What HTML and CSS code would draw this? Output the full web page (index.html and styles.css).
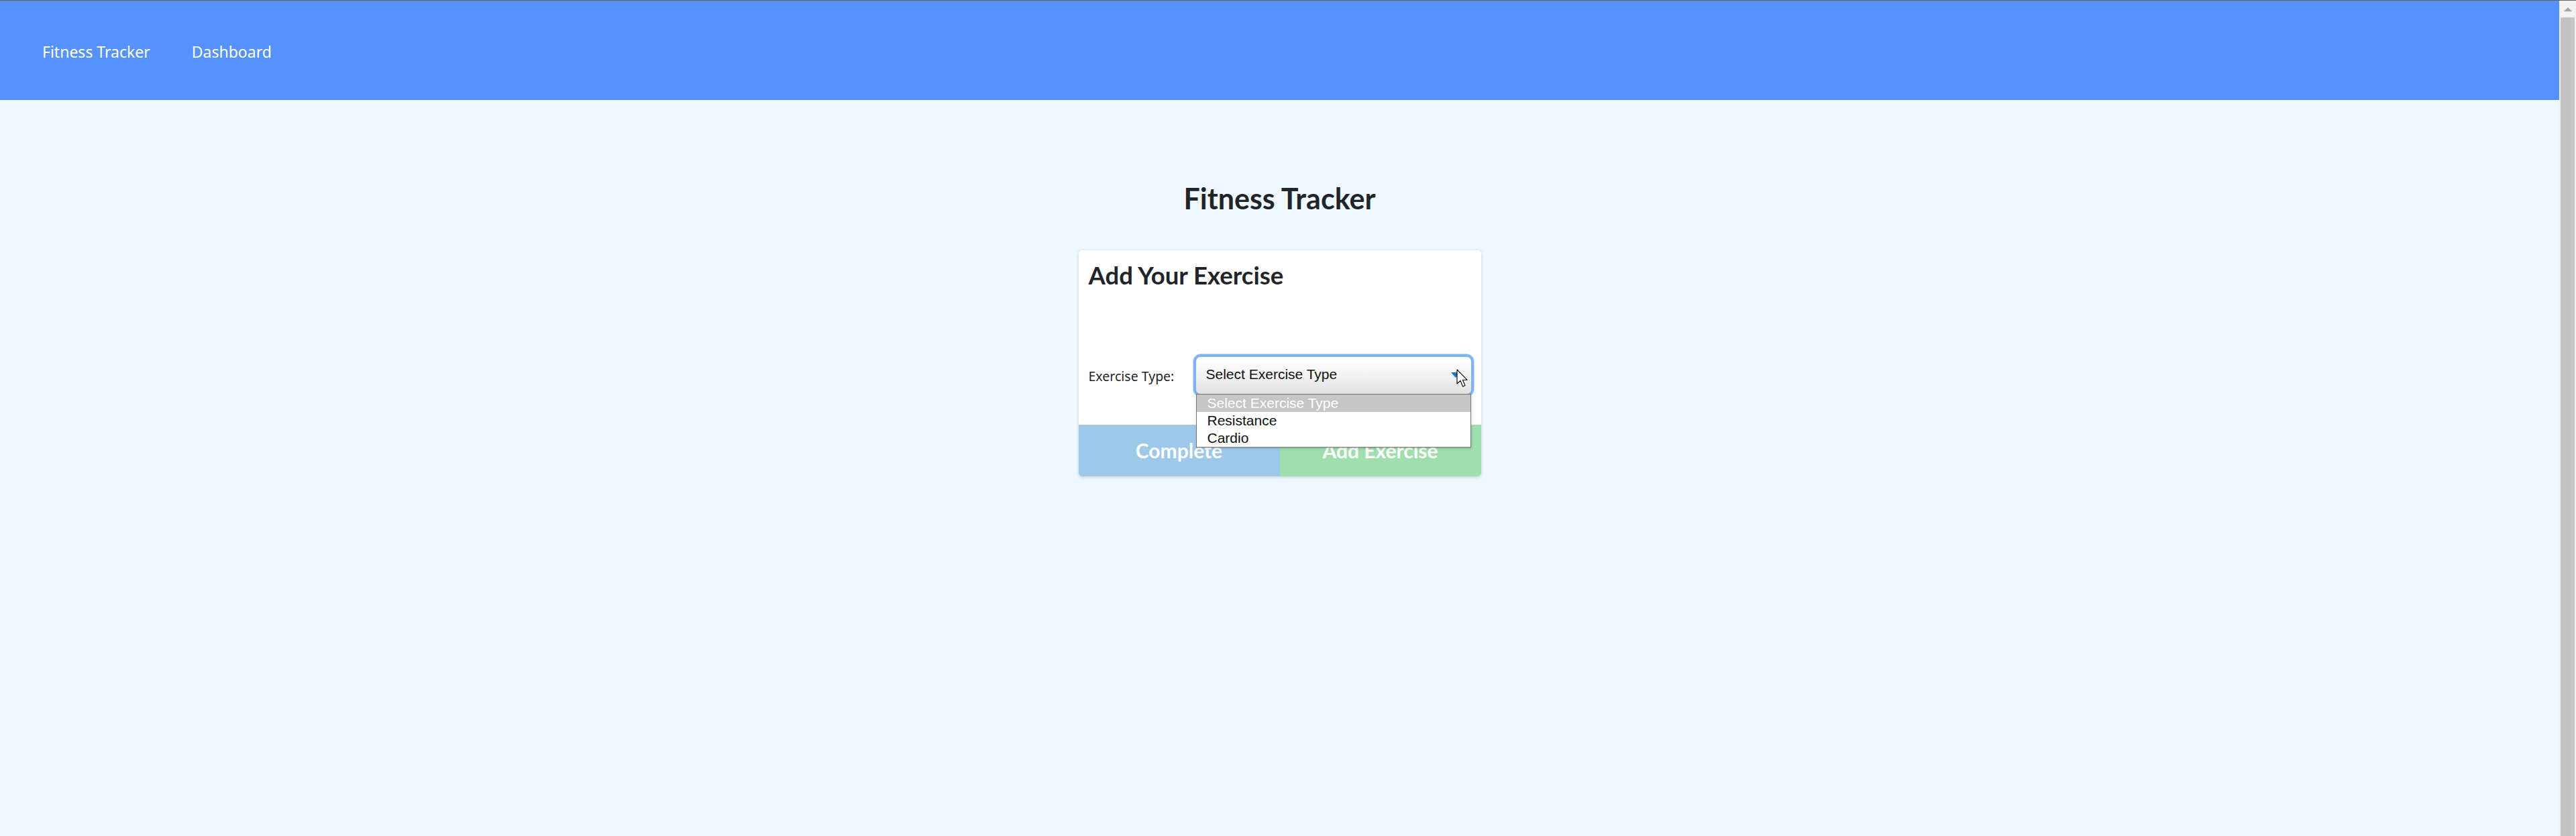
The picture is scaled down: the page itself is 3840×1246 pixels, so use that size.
FILE: index.html
```html
<!DOCTYPE html>
<html lang="en">
<head>
<meta charset="utf-8">
<title>Fitness Tracker</title>
<link rel="stylesheet" href="styles.css">
</head>
<body>
<div class="window">
  <div class="viewport">
    <nav class="navbar">
      <a class="nav-brand" href="#">Fitness Tracker</a>
      <a class="nav-link" href="#">Dashboard</a>
    </nav>
    <main class="page">
      <h1 class="page-title">Fitness Tracker</h1>
      <section class="card">
        <div class="card-body">
          <h2 class="card-title">Add Your Exercise</h2>
          <div class="form-row">
            <label class="form-label">Exercise Type:</label>
            <div class="select-wrap">
              <div class="select">
                <span class="select-text">Select Exercise Type</span>
                <span class="select-arrow"></span>
              </div>
              <ul class="select-list">
                <li class="option option-active">Select Exercise Type</li>
                <li class="option">Resistance</li>
                <li class="option">Cardio</li>
              </ul>
              <svg class="cursor" width="18" height="28" viewBox="0 0 18 28">
                <path d="M1 1 L1 22 L6 17.4 L9.6 26 L13 24.6 L9.4 16.2 L16 16.2 Z" fill="#fff" stroke="#000" stroke-width="1.1" stroke-linejoin="round"/>
              </svg>
            </div>
          </div>
        </div>
        <div class="card-actions">
          <button class="btn btn-complete">Complete</button>
          <button class="btn btn-add">Add Exercise</button>
        </div>
      </section>
    </main>
  </div>
  <div class="scrollbar">
    <div class="scroll-up"><span class="scroll-arrow"></span></div>
    <div class="scroll-track"><div class="scroll-thumb"></div></div>
  </div>
</div>
</body>
</html>
```

FILE: styles.css
```css
html, body {
  margin: 0;
  padding: 0;
  height: 100%;
}

body {
  background: #f0f8ff;
  border-top: 1px solid #5f5f5f;
  box-sizing: border-box;
  overflow: hidden;
}

.window {
  display: flex;
  height: 1245px;
}

.viewport {
  flex: 1;
  display: flex;
  flex-direction: column;
  min-width: 0;
}

.navbar {
  height: 148px;
  background: #5692fe;
  display: flex;
  align-items: center;
  padding: 3px 0 0 63px;
  box-sizing: border-box;
  gap: 62px;
}

.nav-brand,
.nav-link {
  font-family: "Noto Sans", "Open Sans", sans-serif;
  font-size: 23px;
  color: #ffffff;
  text-decoration: none;
}

.page {
  display: flex;
  flex-direction: column;
  align-items: center;
}

.page-title {
  font-family: Lato, "Noto Sans", sans-serif;
  font-weight: 700;
  font-size: 43px;
  line-height: 1.2;
  color: #212529;
  margin: 120.5px 0 51.8px;
}

.card {
  width: 600px;
  height: 337px;
  background: #ffffff;
  border-radius: 5px;
  box-shadow: 0 1px 5px rgba(0, 0, 0, 0.18);
  display: flex;
  flex-direction: column;
}

.card-body {
  flex: 1;
  padding: 16px 15px 0;
  display: flex;
  flex-direction: column;
}

.card-title {
  font-family: Lato, "Noto Sans", sans-serif;
  font-weight: 700;
  font-size: 36.5px;
  line-height: 1.2;
  color: #212529;
  margin: 0;
}

.form-row {
  display: flex;
  align-items: center;
  margin-top: 99.2px;
  height: 55px;
}

.form-label {
  font-family: "Noto Sans", "Open Sans", sans-serif;
  font-size: 19.5px;
  color: #212529;
  width: 160px;
  padding-top: 2px;
}

.select-wrap {
  position: relative;
  width: 410px;
  height: 55px;
}

.select {
  height: 55px;
  box-sizing: border-box;
  border-radius: 7px;
  background: linear-gradient(#ffffff 0%, #f4f4f4 45%, #e2e2e2 100%);
  box-shadow: 0 0 0 4px #7db4f6, 0 0 1px 5px rgba(125, 180, 246, 0.45);
  display: flex;
  align-items: center;
  justify-content: space-between;
  padding: 0 16px 2px 15px;
}

.select-text,
.option {
  font-family: "Liberation Sans", Arial, sans-serif;
  font-size: 21px;
  color: #111111;
}

.select-arrow {
  width: 0;
  height: 0;
  border-left: 7px solid transparent;
  border-right: 7px solid transparent;
  border-top: 8px solid #1679c0;
  margin-top: 2px;
}

.select-list {
  position: absolute;
  left: 0;
  top: 55px;
  width: 410px;
  box-sizing: border-box;
  margin: 0;
  padding: 0;
  list-style: none;
  background: #ffffff;
  border: 1px solid #767676;
  box-shadow: 1px 2px 3px rgba(0, 0, 0, 0.15);
  z-index: 2;
}

.option {
  height: 26px;
  line-height: 26px;
  padding-left: 16px;
}

.option-active {
  background: #c6c6c6;
  color: #ffffff;
}

.cursor {
  position: absolute;
  left: 388px;
  top: 18px;
  z-index: 3;
}

.card-actions {
  display: flex;
  height: 77px;
}

.btn {
  flex: 1;
  border: none;
  margin: 0;
  font-family: Lato, "Noto Sans", sans-serif;
  font-weight: 700;
  font-size: 30px;
  color: #ffffff;
  padding: 0;
}

.btn-complete {
  background: #9dc8ea;
  border-bottom-left-radius: 5px;
}

.btn-add {
  background: #9fdfae;
  border-bottom-right-radius: 5px;
}

.scrollbar {
  width: 25px;
  display: flex;
  flex-direction: column;
  background: #f1f1f1;
}

.scroll-up {
  height: 25px;
  display: flex;
  justify-content: center;
  padding-top: 10px;
  box-sizing: border-box;
}

.scroll-arrow {
  width: 0;
  height: 0;
  border-left: 6px solid transparent;
  border-right: 6px solid transparent;
  border-bottom: 6px solid #a3a3a3;
}

.scroll-track {
  flex: 1;
  padding: 0 2px 0 2px;
}

.scroll-thumb {
  height: 100%;
  background: linear-gradient(90deg, #c1c1c1 0%, #c1c1c1 72%, #c6c6c6 72%, #c6c6c6 100%);
}
```
